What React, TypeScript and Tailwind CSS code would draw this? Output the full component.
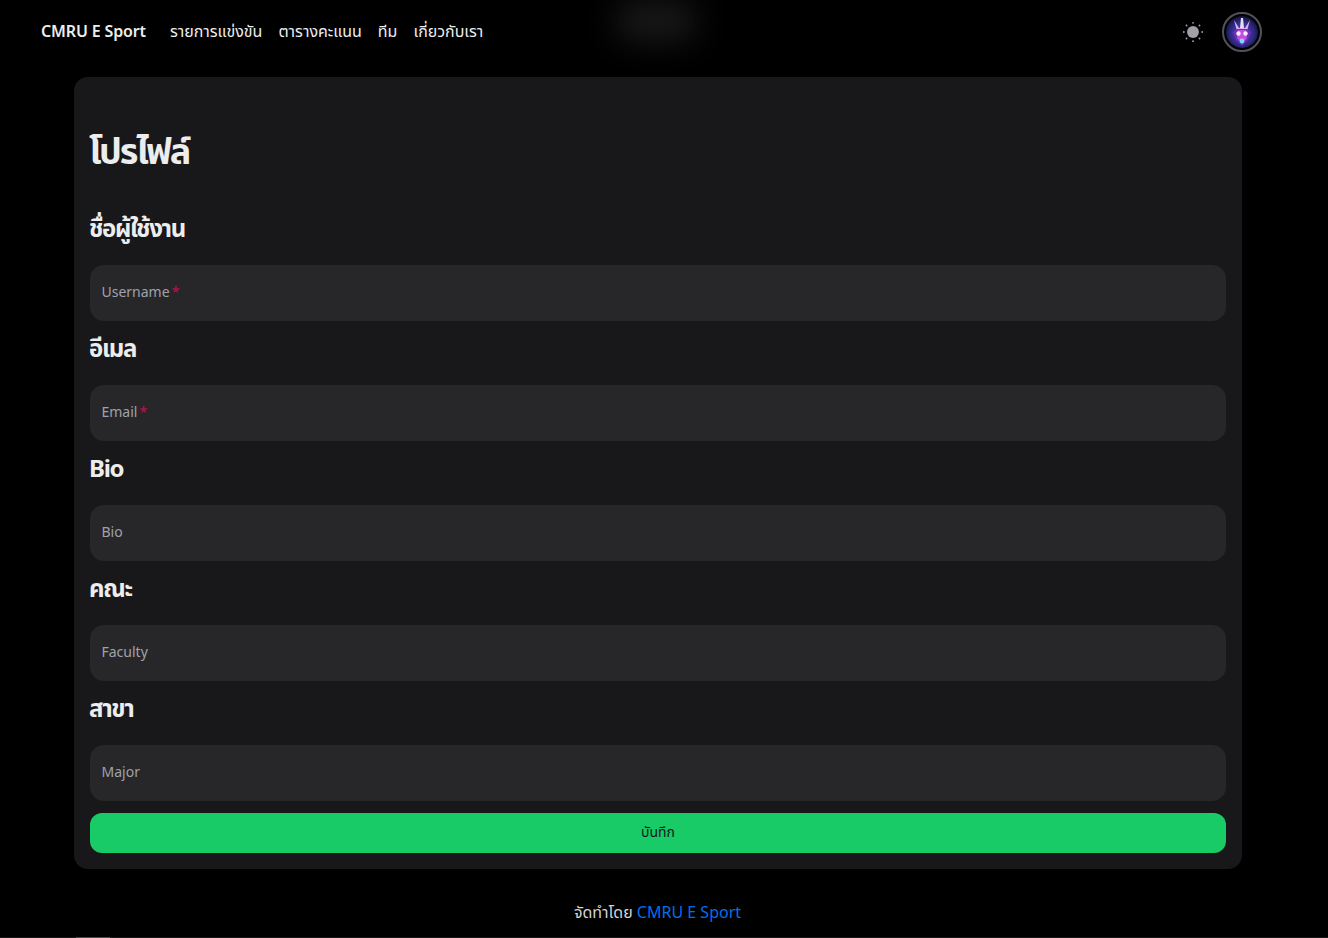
const font = { fontFamily: '"Noto Sans", "Noto Sans Thai", sans-serif' }

function Field({ title, label, required }: { title: string; label: string; required?: boolean }) {
  return (
    <div className="flex flex-col">
      <h2 className="h-[64px] pb-[10px] flex items-center text-2xl font-bold text-[#ecedee] tracking-[-1.3px] leading-8 -ml-px">{title}</h2>
      <div className="h-14 rounded-[14px] bg-[#27272a] pl-[11.5px] pr-3 pb-0.5 flex items-center">
        <span className="text-sm text-[#a1a1aa]">{label}</span>
        {required && <span className="text-sm text-[#c20e4d] ml-0.5">*</span>}
      </div>
    </div>
  )
}

function Avatar() {
  return (
    <div className="w-10 h-10 rounded-full bg-black border-2 border-[#52525b] p-0.5">
      <svg viewBox="0 0 32 32" className="w-full h-full rounded-full">
        <defs>
          <radialGradient id="bg" cx="50%" cy="55%" r="60%">
            <stop offset="0%" stopColor="#7b3cc8" />
            <stop offset="60%" stopColor="#2f2a86" />
            <stop offset="100%" stopColor="#0b0b26" />
          </radialGradient>
          <filter id="soft" x="-20%" y="-20%" width="140%" height="140%">
            <feGaussianBlur stdDeviation="0.7" />
          </filter>
        </defs>
        <circle cx="16" cy="16" r="16" fill="url(#bg)" />
        <g filter="url(#soft)">
          <path d="M8 4l5 8h6l5-8-3 11H11z" fill="#cdb6e6" />
          <path d="M15 2h2l1 10h-4z" fill="#e9dcf5" />
          <path d="M7 16l4-3h10l4 3-3 8-6 6-6-6z" fill="#6d2fb8" />
          <path d="M12 14h8l1 8-5 6-5-6z" fill="#c04fe0" />
          <circle cx="12.5" cy="17.5" r="2.2" fill="#ffe6ff" />
          <circle cx="19.5" cy="17.5" r="2.2" fill="#ffe6ff" />
          <circle cx="16" cy="25" r="2.4" fill="#74dcff" />
        </g>
      </svg>
    </div>
  )
}

export default function App() {
  return (
    <div style={font} className="relative h-screen bg-black overflow-hidden flex flex-col">
      <div className="absolute left-[618px] top-[2px] w-[76px] h-[38px] bg-[#1a1a1a] blur-[16px]" />

      <nav className="relative h-16 flex items-center justify-between pl-[41px] pr-[66px]">
        <div className="flex items-center gap-6 pb-0.5">
          <span className="font-semibold text-base text-[#ecedee] tracking-[-0.15px]">CMRU E Sport</span>
          <ul className="flex items-center gap-4 text-base text-[#ecedee]">
            <li>รายการแข่งขัน</li>
            <li>ตารางคะแนน</li>
            <li>ทีม</li>
            <li>เกี่ยวกับเรา</li>
          </ul>
        </div>
        <div className="flex items-center gap-[18px]">
          <svg viewBox="0 0 24 24" className="w-[22px] h-[22px]" fill="#a1a1aa">
            <circle cx="12" cy="12" r="6.5" />
            <circle cx="12" cy="2" r="1" />
            <circle cx="12" cy="22" r="1" />
            <circle cx="2" cy="12" r="1" />
            <circle cx="22" cy="12" r="1" />
            <circle cx="4.9" cy="4.9" r="1" />
            <circle cx="19.1" cy="4.9" r="1" />
            <circle cx="4.9" cy="19.1" r="1" />
            <circle cx="19.1" cy="19.1" r="1" />
          </svg>
          <Avatar />
        </div>
      </nav>

      <main className="relative mx-[74px] mt-[13px] w-[1168px] h-[792px] shrink-0 rounded-[14px] bg-[#18181b] px-4 pt-[50px] flex flex-col">
        <h1 className="h-[48px] flex items-center text-4xl font-bold text-[#ecedee] tracking-[-2.2px] -ml-px">โปรไฟล์</h1>
        <div className="mt-[26px] flex flex-col">
          <Field title="ชื่อผู้ใช้งาน" label="Username" required />
          <Field title="อีเมล" label="Email" required />
          <Field title="Bio" label="Bio" />
          <Field title="คณะ" label="Faculty" />
          <Field title="สาขา" label="Major" />
        </div>
        <button className="mt-3 h-10 pb-0.5 rounded-xl bg-[#19cb67] text-sm text-[#11181c]">บันทึก</button>
      </main>

      <footer className="h-[69px] pt-[17px] pr-[13px] flex items-center justify-center text-base text-[#d4d4d8]">
        <span>จัดทำโดย <span className="text-[#006fee]">CMRU E Sport</span></span>
      </footer>

      {/* thin strip along the bottom edge */}
      <div className="absolute inset-x-0 bottom-0 h-px bg-[#161616]">
        <div className="absolute left-[76px] w-[34px] h-px bg-[#4a4a4a]" />
      </div>
    </div>
  )
}
